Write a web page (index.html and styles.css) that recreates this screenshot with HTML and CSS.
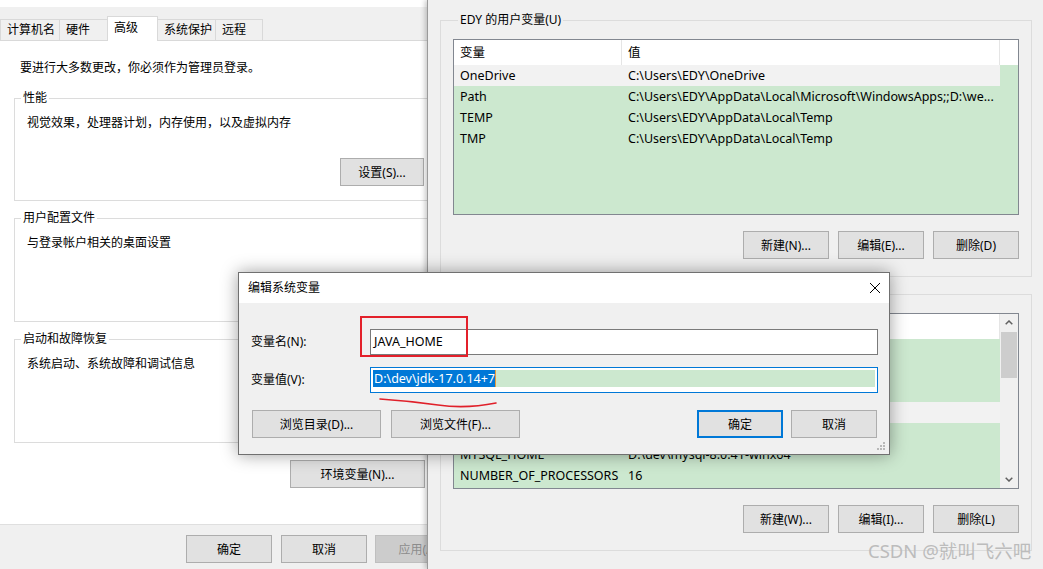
FILE: index.html
```html
<!DOCTYPE html>
<html lang="zh-CN">
<head>
    <meta charset="UTF-8">
    <meta name="viewport" content="width=device-width, initial-scale=1.0">
    <title>环境变量</title>
    <link rel="stylesheet" href="styles.css">
</head>
<body>
<div class="desktop">

    <!-- 系统属性 -->
    <div class="window sysprops">
        <div class="top-edge"></div>
        <div class="tabs">
            <div class="tab">计算机名</div>
            <div class="tab">硬件</div>
            <div class="tab active">高级</div>
            <div class="tab">系统保护</div>
            <div class="tab">远程</div>
        </div>
        <div class="tab-panel">
            <p class="notice">要进行大多数更改，你必须作为管理员登录。</p>

            <fieldset class="group perf">
                <legend>性能</legend>
                <div class="group-body">
                    <p>视觉效果，处理器计划，内存使用，以及虚拟内存</p>
                    <button class="btn btn-settings">设置(S)...</button>
                </div>
            </fieldset>

            <fieldset class="group">
                <legend>用户配置文件</legend>
                <div class="group-body">
                    <p>与登录帐户相关的桌面设置</p>
                </div>
            </fieldset>

            <fieldset class="group">
                <legend>启动和故障恢复</legend>
                <div class="group-body">
                    <p>系统启动、系统故障和调试信息</p>
                </div>
            </fieldset>

            <div class="env-row">
                <button class="btn btn-env">环境变量(N)...</button>
            </div>
        </div>
        <div class="footer">
            <button class="btn">确定</button>
            <button class="btn">取消</button>
            <button class="btn" disabled>应用(A)</button>
        </div>
    </div>

    <!-- 环境变量 -->
    <div class="window envvars">
        <fieldset class="env-group">
            <legend>EDY 的用户变量(U)</legend>
            <div class="list">
                <div class="list-main">
                    <div class="list-head full">
                        <div class="c1">变量</div>
                        <div class="c2">值</div>
                    </div>
                    <div class="row selected">
                        <div class="c1">OneDrive</div>
                        <div class="c2">C:\Users\EDY\OneDrive</div>
                    </div>
                    <div class="row">
                        <div class="c1">Path</div>
                        <div class="c2">C:\Users\EDY\AppData\Local\Microsoft\WindowsApps;;D:\we...</div>
                    </div>
                    <div class="row">
                        <div class="c1">TEMP</div>
                        <div class="c2">C:\Users\EDY\AppData\Local\Temp</div>
                    </div>
                    <div class="row">
                        <div class="c1">TMP</div>
                        <div class="c2">C:\Users\EDY\AppData\Local\Temp</div>
                    </div>
                </div>
            </div>
            <div class="group-buttons">
                <button class="btn">新建(N)...</button>
                <button class="btn">编辑(E)...</button>
                <button class="btn">删除(D)</button>
            </div>
        </fieldset>

        <fieldset class="env-group system">
            <legend>系统变量(S)</legend>
            <div class="list">
                <div class="list-main">
                    <div class="list-head">
                        <div class="c1">变量</div>
                        <div class="c2">值</div>
                    </div>
                    <div class="row">
                        <div class="c1">ComSpec</div>
                        <div class="c2">C:\WINDOWS\system32\cmd.exe</div>
                    </div>
                    <div class="row">
                        <div class="c1">DriverData</div>
                        <div class="c2">C:\Windows\System32\Drivers\DriverData</div>
                    </div>
                    <div class="row">
                        <div class="c1">GRADLE_HOME</div>
                        <div class="c2">D:\dev\gradle-8.5</div>
                    </div>
                    <div class="row selected">
                        <div class="c1">JAVA_HOME</div>
                        <div class="c2">D:\dev\jdk-17.0.14+7</div>
                    </div>
                    <div class="row">
                        <div class="c1">MAVEN_HOME</div>
                        <div class="c2">D:\dev\apache-maven-3.9.6</div>
                    </div>
                    <div class="row">
                        <div class="c1">MYSQL_HOME</div>
                        <div class="c2">D:\dev\mysql-8.0.41-winx64</div>
                    </div>
                    <div class="row">
                        <div class="c1">NUMBER_OF_PROCESSORS</div>
                        <div class="c2">16</div>
                    </div>
                </div>
                <div class="scrollbar">
                    <div class="sb-btn">
                        <svg width="8" height="5" viewBox="0 0 8 5"><path d="M0.7 4.3 L4 1 L7.3 4.3" fill="none" stroke="#606060" stroke-width="1.5"/></svg>
                    </div>
                    <div class="sb-track"><div class="sb-thumb"></div></div>
                    <div class="sb-btn">
                        <svg width="8" height="5" viewBox="0 0 8 5"><path d="M0.7 0.7 L4 4 L7.3 0.7" fill="none" stroke="#606060" stroke-width="1.5"/></svg>
                    </div>
                </div>
            </div>
            <div class="group-buttons">
                <button class="btn">新建(W)...</button>
                <button class="btn">编辑(I)...</button>
                <button class="btn">删除(L)</button>
            </div>
        </fieldset>
    </div>

    <!-- 编辑系统变量 -->
    <div class="window dialog">
        <div class="dlg-title">
            <span>编辑系统变量</span>
            <svg class="dlg-close" width="10" height="10" viewBox="0 0 10 10"><path d="M0 0 L10 10 M10 0 L0 10" stroke="#000" stroke-width="1"/></svg>
        </div>
        <div class="dlg-body">
            <div class="field">
                <label>变量名(N):</label>
                <div class="edit">JAVA_HOME</div>
            </div>
            <div class="field">
                <label>变量值(V):</label>
                <div class="edit focused">
                    <div class="edit-fill"><span class="sel">D:\dev\jdk-17.0.14+7</span><span class="caret"></span></div>
                </div>
            </div>
            <div class="dlg-buttons">
                <button class="btn btn-browse">浏览目录(D)...</button>
                <button class="btn btn-browse">浏览文件(F)...</button>
                <span class="spacer"></span>
                <button class="btn btn-default">确定</button>
                <button class="btn btn-last">取消</button>
            </div>
        </div>

        <!-- red marks drawn over the screenshot -->
        <div class="mark-box"></div>
        <svg class="mark-line" width="124" height="14" viewBox="0 0 124 14"><path d="M4 4 Q 34 6 62 10 T 120 8" fill="none" stroke="#e0202a" stroke-width="1.6" stroke-linecap="round"/></svg>

        <svg class="grip" width="9" height="9" viewBox="0 0 9 9" fill="#b8b8b8">
            <rect x="6" y="0" width="2" height="2"/>
            <rect x="3" y="3" width="2" height="2"/><rect x="6" y="3" width="2" height="2"/>
            <rect x="0" y="6" width="2" height="2"/><rect x="3" y="6" width="2" height="2"/><rect x="6" y="6" width="2" height="2"/>
        </svg>
    </div>

    <div class="watermark">CSDN @就叫飞六吧</div>
</div>
</body>
</html>
```

FILE: styles.css
```css
* {
    margin: 0;
    padding: 0;
    box-sizing: border-box;
}

body {
    width: 1043px;
    height: 569px;
    overflow: hidden;
    background: #fff;
    color: #000;
    font-family: "Noto Sans", "Noto Sans CJK SC", sans-serif;
    font-size: 12px;
    line-height: 16px;
}

.desktop {
    position: relative;
    width: 1043px;
    height: 569px;
    overflow: hidden;
}

.window {
    position: absolute;
    top: 0;
}

/* buttons */
.btn {
    flex-shrink: 0;
    width: 86px;
    height: 28px;
    background: #e1e1e1;
    border: 1px solid #adadad;
    color: #000;
    font-family: inherit;
    font-size: 12px;
}

.btn:disabled {
    background: #cccccc;
    border-color: #bfbfbf;
    color: #8c8c8c;
}

.btn-default {
    border: 2px solid #0078d7;
}

/* system properties window */
.sysprops {
    left: 0;
    width: 450px;
    height: 569px;
    z-index: 1;
    display: flex;
    flex-direction: column;
    background: #f0f0f0;
}

.top-edge {
    height: 7px;
    background: #fff;
}

.tabs {
    display: flex;
    align-items: flex-end;
    height: 34px;
    border-bottom: 1px solid #d9d9d9;
}

.tab {
    height: 21px;
    padding-left: 6px;
    margin-right: -1px;
    border: 1px solid #d9d9d9;
    border-bottom: none;
    background: #f0f0f0;
    line-height: 19px;
    white-space: nowrap;
}

.tab:nth-child(1) { width: 60px; }
.tab:nth-child(2) { width: 49px; }
.tab:nth-child(3) { width: 51px; }
.tab:nth-child(4) { width: 59px; }
.tab:nth-child(5) { width: 48px; }

.tab.active {
    position: relative;
    z-index: 1;
    height: 25px;
    margin-bottom: -1px;
    background: #fff;
    line-height: 22px;
}

.tab-panel {
    flex: 1;
    background: #fff;
    padding: 19px 14px 0 14px;
}

.notice {
    margin: 0 0 14px 6px;
}

.group {
    border: 1px solid #dcdcdc;
    margin-bottom: 9px;
    min-width: 0;
}

.group legend {
    margin-left: 6px;
    padding: 0 2px;
    line-height: 16px;
}

.group-body {
    height: 95px;
    padding: 0 11px 0 12px;
    display: flex;
    flex-direction: column;
}

.group-body p {
    margin-top: 9px;
}

.perf .group-body {
    height: 94px;
}

.perf .group-body p {
    margin-top: 9px;
}

.btn-settings {
    width: 84px;
    margin-top: auto;
    margin-bottom: 14px;
    align-self: flex-end;
}

.env-row {
    display: flex;
    justify-content: flex-end;
    padding-top: 8px;
    padding-right: 11px;
}

.btn-env {
    width: 135px;
}

.footer {
    height: 45px;
    border-top: 1px solid #dfdfdf;
    background: #f0f0f0;
    display: flex;
    padding: 10px 0 0 186px;
}

.footer .btn {
    margin-right: 9px;
}

.footer .btn:nth-child(2) {
    margin-right: 8px;
}

/* environment variables window */
.envvars {
    left: 427px;
    width: 616px;
    height: 569px;
    z-index: 2;
    background: #f0f0f0;
    border-left: 1px solid #9a9a9a;
    box-shadow: -2px 0 5px rgba(0, 0, 0, 0.22);
    padding: 12px 11px 0 12px;
}

.env-group {
    border: 1px solid #dcdcdc;
    padding: 0 12px 17px 12px;
    min-width: 0;
}

.env-group legend {
    margin-left: 5px;
    padding: 0 2px;
    line-height: 16px;
}

.env-group.system {
    margin-top: 9px;
}

.list {
    display: flex;
    height: 176px;
    margin-top: 11px;
    border: 1px solid #828790;
    background: #cce8cf;
    font-size: 12.5px;
    overflow: hidden;
}

.list-main {
    flex: 1;
}

.list-head {
    display: flex;
    width: 546px;
    height: 25px;
    line-height: 25px;
    background: #fff;
}

.list-head.full {
    width: 100%;
}

.list-head .c1,
.list-head .c2 {
    border-right: 1px solid #e5e5e5;
}

.row {
    display: flex;
    width: 546px;
    height: 21px;
    line-height: 21px;
}

.row.selected {
    background: #f2f2f2;
}

.c1 {
    width: 168px;
    padding-left: 6px;
    white-space: nowrap;
    overflow: hidden;
}

.c2 {
    width: 378px;
    padding-left: 6px;
    white-space: nowrap;
    overflow: hidden;
}

.scrollbar {
    width: 18px;
    display: flex;
    flex-direction: column;
    background: #f0f0f0;
}

.sb-btn {
    height: 17px;
    display: flex;
    align-items: center;
    justify-content: center;
}

.sb-track {
    flex: 1;
    padding: 1px 1px 0 1px;
}

.sb-thumb {
    height: 46px;
    background: #cdcdcd;
}

.group-buttons {
    display: flex;
    justify-content: flex-end;
    gap: 9px;
    margin-top: 16px;
}

/* edit system variable dialog */
.dialog {
    left: 238px;
    top: 272px;
    width: 652px;
    height: 183px;
    z-index: 3;
    background: #f0f0f0;
    border: 1px solid #707070;
    box-shadow: 0 0 16px rgba(0, 0, 0, 0.38);
}

.dlg-title {
    display: flex;
    align-items: center;
    height: 30px;
    padding: 0 9px;
    background: #fff;
}

.dlg-close {
    margin-left: auto;
}

.dlg-body {
    padding: 26px 11px 0 12px;
}

.field {
    display: flex;
    align-items: center;
    height: 26px;
}

.field + .field {
    margin-top: 12px;
}

.field label {
    width: 119px;
}

.edit {
    flex: 1;
    height: 26px;
    padding: 0 0 1px 3px;
    border: 1px solid #7a7a7a;
    background: #fff;
    font-size: 12.5px;
    line-height: 23px;
}

.edit.focused {
    padding: 2px 2px 5px 2px;
    border-color: #0078d7;
}

.edit-fill {
    display: flex;
    height: 17px;
    background: #cce8cf;
    line-height: 17px;
}

.sel {
    background: #0078d7;
    color: #fff;
    padding-left: 1px;
}

.caret {
    width: 1px;
    background: #e89a3c;
}

.dlg-buttons {
    display: flex;
    gap: 10px;
    margin-top: 17px;
    padding-left: 1px;
}

.btn-browse {
    width: 129px;
}

.spacer {
    flex: 1;
}

.btn-default {
    margin-right: -2px;
}

.btn-last {
    margin-right: 1px;
}

.mark-box {
    position: absolute;
    left: 121px;
    top: 43px;
    width: 108px;
    height: 41px;
    border: 2px solid #e3202a;
}

.mark-line {
    position: absolute;
    left: 137px;
    top: 122px;
}

.grip {
    position: absolute;
    right: 3px;
    bottom: 3px;
}

.watermark {
    position: absolute;
    left: 868px;
    top: 539px;
    z-index: 4;
    color: #bcbcbc;
    font-size: 18.5px;
    line-height: 24px;
    white-space: nowrap;
}
```
